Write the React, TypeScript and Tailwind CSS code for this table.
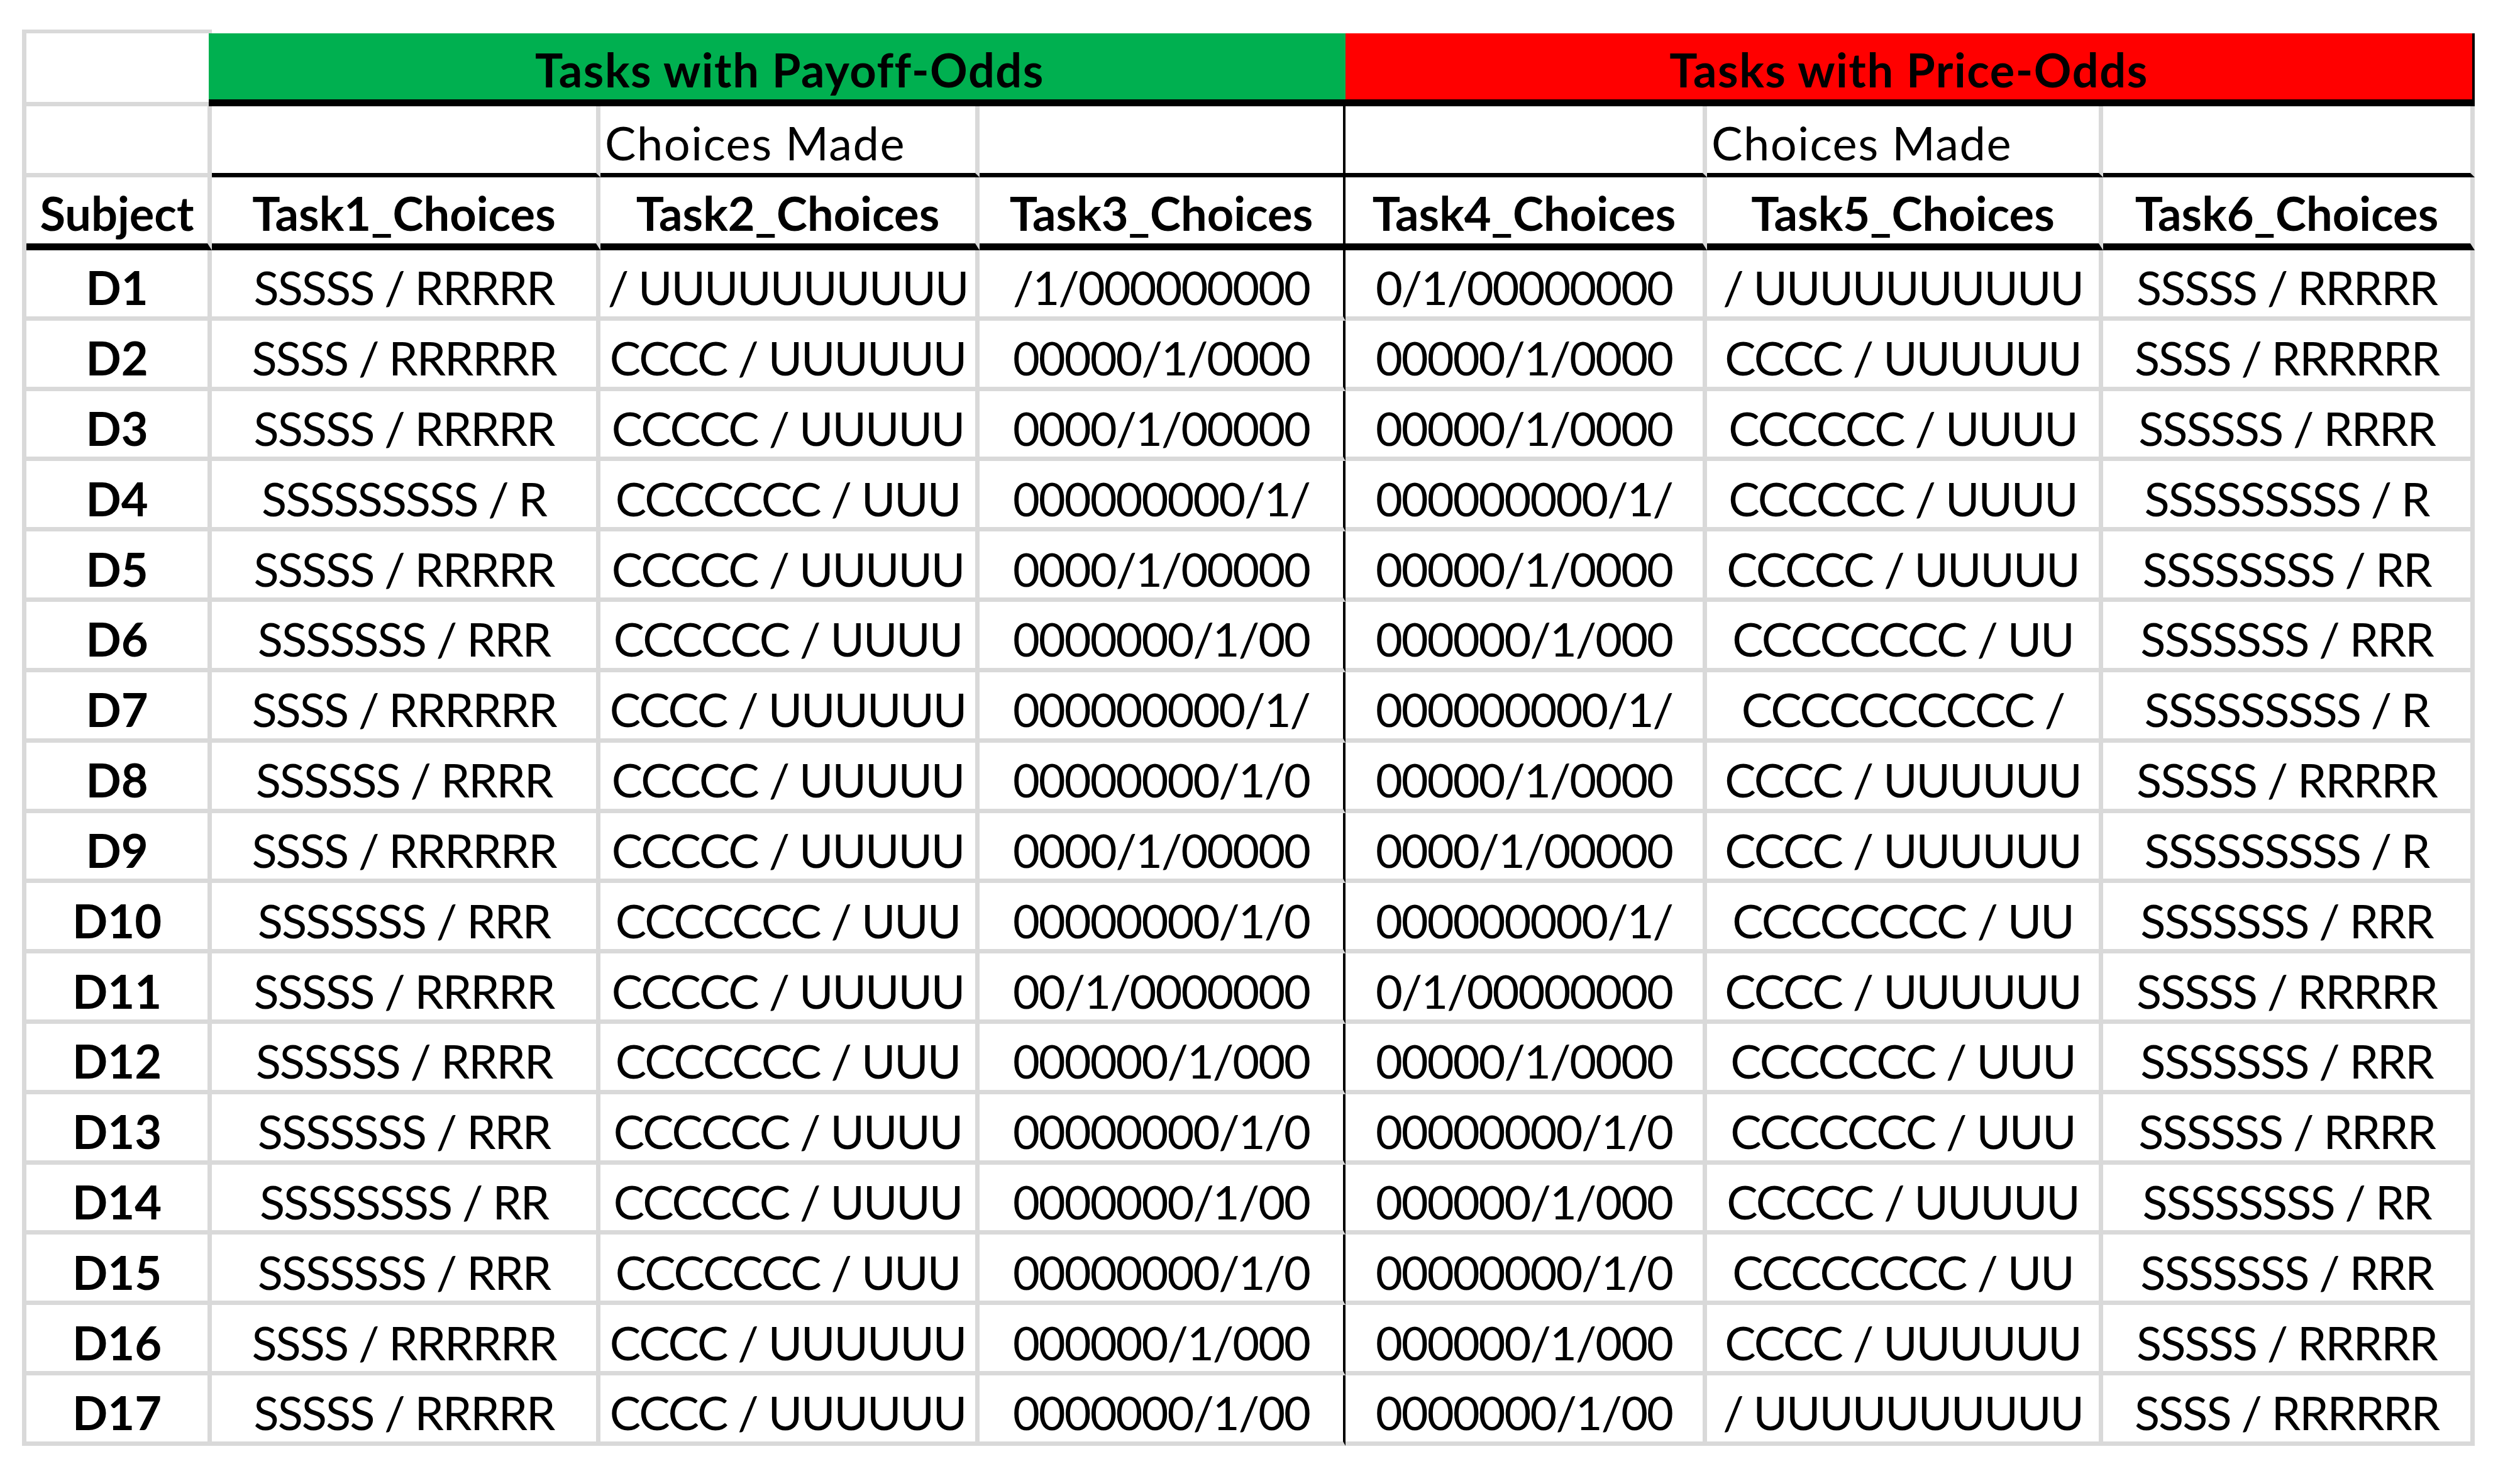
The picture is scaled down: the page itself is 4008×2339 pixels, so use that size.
import React from "react";

type Row = [string, string, string, string, string, string, string];

const rows: Row[] = [
  ["D1", "SSSSS / RRRRR", "/ UUUUUUUUUU", "/1/000000000", "0/1/00000000", "/ UUUUUUUUUU", "SSSSS / RRRRR"],
  ["D2", "SSSS / RRRRRR", "CCCC / UUUUUU", "00000/1/0000", "00000/1/0000", "CCCC / UUUUUU", "SSSS / RRRRRR"],
  ["D3", "SSSSS / RRRRR", "CCCCC / UUUUU", "0000/1/00000", "00000/1/0000", "CCCCCC / UUUU", "SSSSSS / RRRR"],
  ["D4", "SSSSSSSSS / R", "CCCCCCC / UUU", "000000000/1/", "000000000/1/", "CCCCCC / UUUU", "SSSSSSSSS / R"],
  ["D5", "SSSSS / RRRRR", "CCCCC / UUUUU", "0000/1/00000", "00000/1/0000", "CCCCC / UUUUU", "SSSSSSSS / RR"],
  ["D6", "SSSSSSS / RRR", "CCCCCC / UUUU", "0000000/1/00", "000000/1/000", "CCCCCCCC / UU", "SSSSSSS / RRR"],
  ["D7", "SSSS / RRRRRR", "CCCC / UUUUUU", "000000000/1/", "000000000/1/", "CCCCCCCCCC /", "SSSSSSSSS / R"],
  ["D8", "SSSSSS / RRRR", "CCCCC / UUUUU", "00000000/1/0", "00000/1/0000", "CCCC / UUUUUU", "SSSSS / RRRRR"],
  ["D9", "SSSS / RRRRRR", "CCCCC / UUUUU", "0000/1/00000", "0000/1/00000", "CCCC / UUUUUU", "SSSSSSSSS / R"],
  ["D10", "SSSSSSS / RRR", "CCCCCCC / UUU", "00000000/1/0", "000000000/1/", "CCCCCCCC / UU", "SSSSSSS / RRR"],
  ["D11", "SSSSS / RRRRR", "CCCCC / UUUUU", "00/1/0000000", "0/1/00000000", "CCCC / UUUUUU", "SSSSS / RRRRR"],
  ["D12", "SSSSSS / RRRR", "CCCCCCC / UUU", "000000/1/000", "00000/1/0000", "CCCCCCC / UUU", "SSSSSSS / RRR"],
  ["D13", "SSSSSSS / RRR", "CCCCCC / UUUU", "00000000/1/0", "00000000/1/0", "CCCCCCC / UUU", "SSSSSS / RRRR"],
  ["D14", "SSSSSSSS / RR", "CCCCCC / UUUU", "0000000/1/00", "000000/1/000", "CCCCC / UUUUU", "SSSSSSSS / RR"],
  ["D15", "SSSSSSS / RRR", "CCCCCCC / UUU", "00000000/1/0", "00000000/1/0", "CCCCCCCC / UU", "SSSSSSS / RRR"],
  ["D16", "SSSS / RRRRRR", "CCCC / UUUUUU", "000000/1/000", "000000/1/000", "CCCC / UUUUUU", "SSSSS / RRRRR"],
  ["D17", "SSSSS / RRRRR", "CCCC / UUUUUU", "0000000/1/00", "0000000/1/00", "/ UUUUUUUUUU", "SSSS / RRRRRR"],
];

const headers = ["Subject", "Task1_Choices", "Task2_Choices", "Task3_Choices", "Task4_Choices", "Task5_Choices", "Task6_Choices"];

// right edge of each column: gray gridline, black after Task3
const rightEdge = [
  "border-r-[7px] border-r-[#d9d9d9]",
  "border-r-[7px] border-r-[#d9d9d9]",
  "border-r-[7px] border-r-[#d9d9d9]",
  "border-r-[4px] border-r-black",
  "border-r-[7px] border-r-[#d9d9d9]",
  "border-r-[7px] border-r-[#d9d9d9]",
  "border-r-[7px] border-r-[#d9d9d9]",
];

export default function App() {
  return (
    <div className="w-[4008px] h-[2339px] bg-white pt-[47px] pl-[35px] font-['Lato',sans-serif] text-black text-[74px] leading-none whitespace-nowrap">
      <div className="grid w-[3901px] grid-cols-[295px_618px_603px_582px_575px_630px_591px] grid-rows-[122px_113px_116px_repeat(17,111.82px)] border-l-[7px] border-l-[#d9d9d9]">
        {/* group header */}
        <div className="border-t-[6px] border-t-[#d9d9d9] border-b-[7px] border-b-[#d9d9d9]" />
        <div className="col-span-3 mt-[6px] -ml-[5px] flex items-center justify-center pt-[10px] pl-[40px] bg-[#00b050] border-b-[11px] border-b-black font-bold tracking-[1.5px]">
          Tasks with Payoff-Odds
        </div>
        <div className="col-span-3 mt-[6px] flex items-center justify-center pt-[10px] bg-[#ff0000] border-b-[11px] border-b-black border-r-[4px] border-r-black font-bold tracking-[1.5px]">
          Tasks with Price-Odds
        </div>

        {/* choices made */}
        {headers.map((_, i) => (
          <div
            key={"cm" + i}
            className={`flex items-center pt-[10px] pl-[7px] tracking-[1.5px] border-b-[7px] ${i === 0 ? "border-b-[#d9d9d9]" : "border-b-black"} ${rightEdge[i]}`}
          >
            {i === 2 || i === 5 ? "Choices Made" : ""}
          </div>
        ))}

        {/* column headers */}
        {headers.map((h, i) => (
          <div
            key={h}
            className={`flex items-center justify-center pt-[8px] font-bold border-b-[11px] border-b-black ${rightEdge[i]}`}
          >
            {h}
          </div>
        ))}

        {rows.map((row) =>
          row.map((cell, i) => (
            <div
              key={row[0] + i}
              className={`flex items-center justify-center pt-[14px] border-b-[7px] border-b-[#d9d9d9] ${rightEdge[i]} ${i === 0 ? "font-bold" : "tracking-[-2px]"}`}
            >
              {cell}
            </div>
          ))
        )}
      </div>
    </div>
  );
}
